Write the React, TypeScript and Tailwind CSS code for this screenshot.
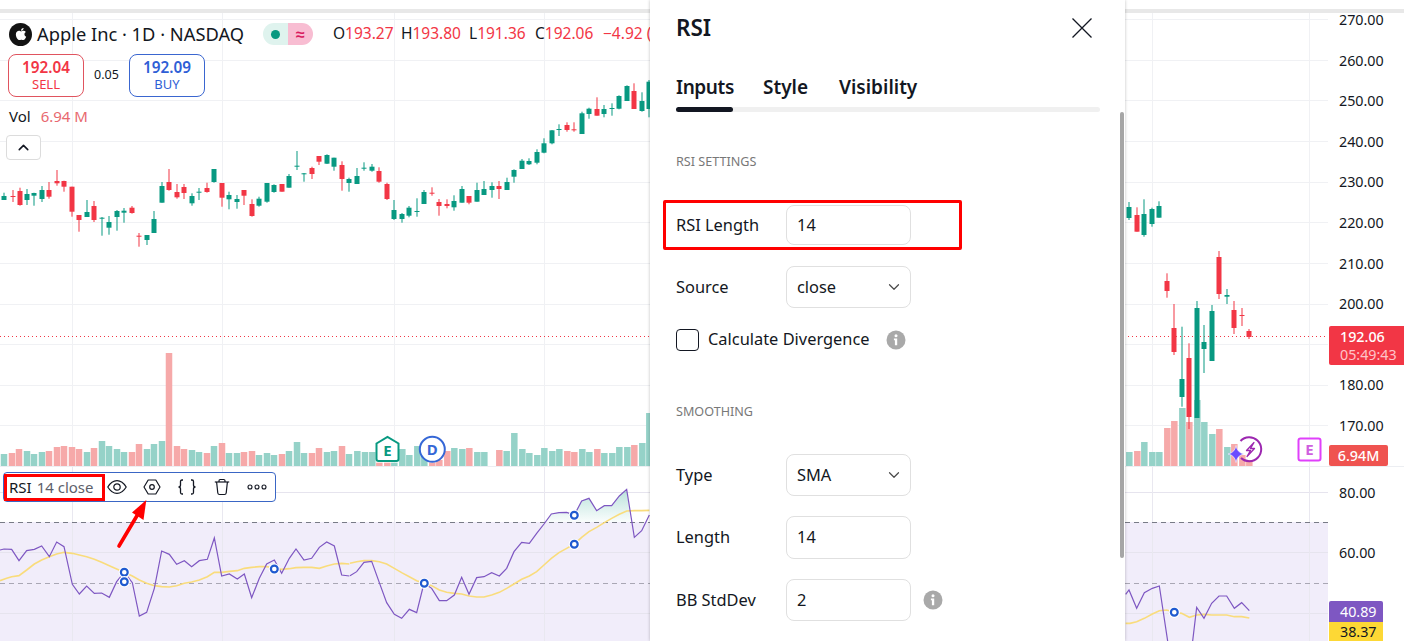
import React from 'react';
import { FaApple } from 'react-icons/fa';
import { ChevronDown, ChevronUp } from 'lucide-react';

const GREEN = '#089981';
const RED = '#f23645';

type Candle = [number, number, number, number, number, 'g' | 'r'];

const candles: Candle[] = [
  [4.3, 192.7, 200, 196, 200, 'g'], [12.5, 190, 202, 196, 197, 'r'], [19.5, 187.7, 205.7, 191, 205, 'r'],
  [27.3, 189, 205, 194, 200, 'g'], [34.3, 192.7, 205.7, 193, 195.7, 'g'], [42.3, 186, 202, 190, 199, 'g'],
  [49.3, 182, 198.7, 190, 196.7, 'r'], [57.3, 170, 185.7, 181, 183.3, 'r'], [64.3, 180.7, 191.7, 181, 186.7, 'r'],
  [72.3, 186.7, 216.7, 186.7, 211.7, 'r'], [79.3, 215, 231.7, 215, 220, 'r'], [87.3, 200, 217, 212, 217, 'g'],
  [94.3, 201, 222, 206, 220, 'r'], [102.3, 217, 235.7, 217.7, 218.7, 'g'], [109.3, 216, 234.7, 222, 227.7, 'g'],
  [117.3, 210, 230.7, 211, 217, 'g'], [124.3, 208, 222.7, 210.7, 212.7, 'g'], [132.3, 206, 213.7, 207.7, 213, 'r'],
  [139.3, 233, 246.7, 235.7, 236.7, 'r'], [147.3, 235, 245, 235, 240, 'g'], [154.3, 211, 233, 219, 233, 'g'],
  [162.3, 182, 202.7, 186, 202.7, 'g'], [169.3, 169, 190.7, 182, 190, 'r'], [177.3, 184, 198.7, 192, 197.3, 'r'],
  [184.3, 184, 199, 187, 193, 'r'], [192.3, 193.3, 205.7, 196, 203.3, 'g'], [199.3, 188, 200, 191.7, 192.7, 'g'],
  [207.3, 182.7, 192.7, 188, 192, 'r'], [214.3, 169, 182.7, 169, 182, 'g'], [222.3, 183, 206.7, 183, 197.7, 'r'],
  [229.3, 191.7, 209.3, 195, 199.3, 'g'], [237.3, 195, 208.7, 199, 202, 'g'], [244.3, 190, 205, 190, 195.7, 'r'],
  [252.3, 199.3, 216.7, 204, 216, 'r'], [259.3, 196.7, 206.7, 198.7, 205.7, 'g'], [267.3, 183, 202.7, 183, 201.7, 'g'],
  [274.3, 184.3, 192.7, 185, 192, 'g'], [282.3, 184, 191.7, 184, 191.7, 'r'], [289.3, 174, 187.7, 176, 187.7, 'g'],
  [297.3, 151, 170, 165.7, 166.7, 'g'], [304.3, 173, 181.7, 173.3, 174.3, 'g'], [312.3, 166.7, 179, 168, 174, 'r'],
  [319.3, 156, 165, 156, 161.7, 'r'], [327.3, 154.3, 164, 155, 163.7, 'g'], [334.3, 157.7, 170.7, 157.7, 166.7, 'g'],
  [342.3, 161.3, 190.7, 165, 179, 'r'], [349.3, 177.7, 191.7, 179, 183, 'g'], [357.3, 168, 184, 176, 184, 'g'],
  [364.3, 162.3, 170.7, 167.7, 168.7, 'g'], [372.3, 164, 171.7, 166.7, 170.7, 'g'], [379.3, 167.3, 182.7, 171, 181.7, 'r'],
  [387.3, 182.7, 200, 184, 199, 'r'], [394.3, 200, 220, 210, 219, 'g'], [402.3, 213, 222.7, 214, 219, 'g'],
  [409.3, 206, 217.3, 207.7, 215.7, 'g'], [417.3, 198.3, 216.7, 211, 212, 'g'], [424.3, 190, 204, 192, 204, 'g'],
  [432.3, 187.3, 195.7, 192.7, 193.7, 'r'], [439.3, 199, 215.7, 202, 206, 'r'], [447.3, 199.3, 208.3, 204, 206, 'r'],
  [454.3, 195.3, 210.7, 201, 207.3, 'g'], [462.3, 186, 202.7, 189, 202.7, 'g'], [469.3, 196, 204.3, 196, 202.7, 'r'],
  [477.3, 182.7, 201.7, 190, 201.7, 'g'], [484.3, 181, 195, 189, 195, 'g'], [492.3, 182.3, 197.7, 186, 190, 'g'],
  [499.3, 181, 199, 186, 189, 'r'], [507.3, 177.7, 190, 182, 190, 'g'], [514.3, 169.3, 182.7, 170, 176.7, 'g'],
  [522.3, 159, 169, 160.7, 169, 'g'], [529.3, 158.3, 165, 161, 164.3, 'g'], [537.3, 149.3, 164.3, 152, 162.7, 'g'],
  [544.3, 138.3, 153.3, 143.3, 152.7, 'g'], [552.3, 130, 144.3, 130.3, 143.3, 'g'], [559.3, 124.3, 136, 129, 130, 'g'],
  [567.3, 122.3, 131.7, 125, 130, 'r'], [574.3, 122.3, 131.7, 129.3, 130.3, 'r'], [582.3, 111.7, 134, 113.3, 134, 'g'],
  [589.3, 107.7, 118.7, 108.7, 114, 'g'], [597.3, 97.3, 115.7, 109, 115.7, 'r'], [604.3, 105, 117.3, 109, 114, 'g'],
  [612.3, 103.3, 115.7, 108, 109, 'g'], [619.3, 95.3, 109.3, 96, 108.7, 'g'], [627.3, 85.3, 101, 86, 101, 'g'],
  [634.3, 83.3, 109, 91, 109, 'r'], [642.3, 92.3, 111.7, 101, 111, 'g'], [649.3, 80, 117.3, 81.7, 109, 'g'],
  [1129.3, 202, 220, 207, 218, 'g'], [1137.3, 207.3, 231.7, 215, 231.7, 'r'], [1144.3, 199.3, 236.7, 214, 235, 'g'],
  [1152.3, 207.7, 226.7, 209, 224, 'g'], [1159.3, 201.3, 217.7, 206, 217.7, 'g'], [1167.3, 273.3, 297.7, 281, 291, 'r'],
  [1174.3, 304, 355, 328, 352, 'r'], [1182.3, 326.7, 406.7, 379, 397, 'g'], [1189.3, 343.3, 429, 358, 417, 'r'],
  [1197.3, 301, 418, 308, 418, 'g'], [1204.3, 325, 373, 342, 349, 'g'], [1212.3, 305, 361, 311, 361, 'g'],
  [1219.3, 251, 299, 257, 294, 'r'], [1227.3, 289, 304, 295, 296.7, 'g'], [1234.3, 301, 334, 310, 328, 'r'],
  [1242.3, 308, 326, 315, 316, 'r'], [1249.3, 329, 339, 331, 337, 'r'],
];

// volume: [x, top y, colour]; tops are read off the 3x crops, so they are divided back down
const volLeft: [number, number, string][] = [
  [4, 342, 'g'], [12, 339, 'r'], [19, 327, 'r'], [27, 333, 'g'], [34, 342, 'g'], [42, 336, 'g'], [49, 333, 'r'], [57, 321, 'r'],
  [64, 318, 'r'], [72, 321, 'r'], [79, 327, 'r'], [87, 336, 'g'], [94, 324, 'r'], [102, 303, 'g'], [109, 318, 'g'], [117, 327, 'g'],
  [124, 336, 'g'], [132, 336, 'r'], [139, 312, 'r'], [147, 327, 'g'], [154, 312, 'g'], [162, 303, 'g'], [169, 39, 'r'], [177, 318, 'r'],
  [184, 327, 'r'], [192, 330, 'g'], [199, 336, 'g'], [207, 339, 'r'], [214, 318, 'g'], [222, 309, 'r'], [229, 339, 'g'], [237, 339, 'g'],
  [244, 336, 'r'], [252, 333, 'r'], [259, 345, 'g'], [267, 339, 'g'], [274, 345, 'g'], [282, 342, 'r'], [289, 333, 'g'], [297, 306, 'g'],
  [304, 339, 'g'], [312, 339, 'r'], [319, 324, 'r'], [327, 336, 'g'], [334, 333, 'g'], [342, 318, 'r'], [349, 342, 'g'],
];
const volMid: [number, number, string][] = [
  [22, 93, 'g'], [45, 96, 'g'], [67, 96, 'g'], [88, 128, 'r'], [112, 128, 'r'], [133, 128, 'g'], [157, 87, 'g'], [178, 105, 'g'],
  [202, 78, 'g'], [223, 100, 'g'], [247, 128, 'r'], [268, 120, 'r'], [292, 93, 'r'], [313, 84, 'g'], [337, 87, 'g'], [358, 84, 'r'],
  [382, 96, 'g'], [403, 96, 'g'], [448, 90, 'r'], [470, 93, 'g'], [493, 39, 'g'], [517, 87, 'g'], [538, 99, 'g'], [562, 105, 'g'],
  [583, 84, 'g'], [607, 93, 'g'], [628, 87, 'g'], [652, 93, 'r'], [673, 96, 'r'], [697, 87, 'g'], [718, 96, 'g'], [742, 87, 'r'],
  [763, 99, 'g'], [787, 99, 'g'], [808, 81, 'g'], [832, 81, 'g'], [853, 75, 'r'], [877, 69, 'g'], [898, -21, 'g'],
];
const volRight: [number, number, string][] = [
  [28, 816, 'g'], [52, 813, 'r'], [73, 786, 'g'], [97, 816, 'g'], [118, 816, 'g'], [142, 744, 'r'], [163, 723, 'r'], [187, 684, 'g'],
  [208, 726, 'r'], [232, 660, 'g'], [253, 726, 'g'], [277, 762, 'g'], [298, 747, 'r'], [322, 801, 'g'], [343, 792, 'r'], [367, 825, 'r'], [388, 840, 'r'],
];

const volumes = [
  ...volLeft.map(([x, t, c]) => ({ x, top: 340 + t / 3, c })),
  ...volMid.map(([x, t, c]) => ({ x: 350 + x / 3, top: 420 + t / 3, c })),
  ...volRight.map(([x, t, c]) => ({ x: 1120 + x / 3, top: 180 + t / 3, c })),
];

const pts = (list: number[][], ox: number, oy: number) =>
  list.map(([x, y]) => `${ox + x / 3},${oy + y / 3}`).join(' ');

const rsiA = [[0,630],[12,627],[35,628],[57,662],[80,632],[103,628],[125,618],[148,650],[170,606],[192,620],[217,733],[238,762],[260,738],[283,760],[305,759],[328,772],[350,725],[373,697],[397,728],[418,828],[440,817],[463,745],[485,633],[508,643],[530,673],[553,662],[575,680],[598,662],[622,658],[643,594],[665,708],[688,702],[712,717],[733,702],[755,773],[778,715],[800,672],[823,660],[845,700],[868,655],[888,627],[912,660],[935,655],[958,622],[980,606],[1003,618],[1025,705],[1048,708]];
const rsiB = [[0,467],[20,455],[42,427],[65,424],[88,488],[110,548],[133,583],[155,595],[178,568],[200,578],[222,490],[245,505],[268,542],[290,542],[313,525],[335,472],[357,523],[380,473],[402,470],[425,458],[448,468],[470,445],[492,395],[515,367],[538,370],[560,340],[582,312],[604,282],[627,278],[650,277],[673,285],[695,243],[717,235],[740,272],[763,257],[785,257],[808,228],[830,208],[853,352],[875,332],[898,285]];
const rsiC = [[17,403],[27,390],[50,445],[73,398],[97,385],[118,378],[143,543],[150,580]];
const rsiD = [[212,580],[218,543],[230,442],[252,475],[275,430],[297,408],[320,408],[343,445],[365,428],[388,452]];
const maA = [[0,722],[20,715],[35,710],[57,707],[80,690],[103,672],[125,660],[148,650],[170,642],[192,637],[217,640],[238,645],[260,650],[283,658],[305,667],[328,677],[350,687],[373,697],[397,708],[418,720],[440,730],[463,737],[485,740],[508,741],[530,737],[553,730],[575,726],[598,720],[622,710],[643,697],[665,697],[688,694],[712,692],[733,685],[755,682],[778,680],[800,680],[823,684],[845,688],[868,686],[888,683],[912,682],[935,682],[958,685],[980,678],[1003,672],[1025,670],[1048,672]];
const maB = [[0,430],[20,425],[42,422],[65,422],[88,425],[110,432],[133,445],[155,458],[178,470],[200,482],[222,490],[245,497],[268,510],[290,517],[313,520],[335,522],[357,528],[380,531],[402,531],[425,525],[448,517],[470,505],[492,492],[515,478],[538,468],[560,455],[582,435],[604,415],[627,398],[650,385],[673,372],[695,352],[717,335],[740,322],[763,308],[785,295],[808,283],[830,273],[853,272],[875,272],[898,271]];
const maC = [[17,490],[30,490],[50,485],[73,475],[97,462],[118,452],[140,450],[163,457],[185,460],[208,472],[230,465],[252,463],[275,465],[320,465],[343,470],[365,470],[388,474]];
const overbought = [[582,307],[604,282],[627,278],[650,277],[673,285],[695,243],[717,235],[740,272],[763,257],[785,257],[808,228],[830,208],[842,307]];

const rings = [[124.3, 572.3], [124.3, 581.7], [274.3, 569], [424.3, 583.3], [574.3, 515.3], [574.3, 544.3], [1174.3, 612.3]];
const vGrid = [72.5, 222.5, 394.5, 544.5, 1152.5, 1309.5];
const hGrid = [19.5, 60.5, 100.5, 141.5, 182.5, 222.5, 263.5, 304.5, 344.5, 385.5, 425.5];
const prices = ['270.00', '260.00', '250.00', '240.00', '230.00', '220.00', '210.00', '200.00', '190.00', '180.00', '170.00'];

const MainChart = () => (
  <svg className="block w-[1328px] h-[453px]" viewBox="0 13 1328 453">
    {hGrid.map((y) => <line key={y} x1="0" x2="1328" y1={y} y2={y} stroke="#f0f1f4" />)}
    {vGrid.map((x) => <line key={x} x1={x} x2={x} y1="13" y2="466" stroke="#f0f1f4" />)}
    {volumes.map((v, i) => (
      <rect key={i} x={v.x - 3.25} y={v.top} width="6.5" height={466 - v.top} fill={v.c === 'g' ? '#95d2c8' : '#f6a9a9'} />
    ))}
    <line x1="0" x2="1328" y1="336.5" y2="336.5" stroke={RED} strokeDasharray="1 3" />
    {candles.map(([x, wt, wb, bt, bb, c], i) => (
      <g key={i} fill={c === 'g' ? GREEN : RED}>
        <rect x={Math.round(x) - 0.5} y={wt} width="1" height={wb - wt} />
        <rect x={Math.round(x) - 2.5} y={bt} width="5" height={Math.max(bb - bt, 1)} />
      </g>
    ))}
    <path d="M376.5 443.5 L387.5 436.8 L398.5 443.5 V459 Q398.5 461 396.5 461 H378.5 Q376.5 461 376.5 459 Z" fill="#fff" stroke={GREEN} strokeWidth="2" />
    <text x="387.5" y="455.5" textAnchor="middle" fontSize="15" fontWeight="700" fill={GREEN}>E</text>
    <circle cx="432.3" cy="449.3" r="12.5" fill="#fff" stroke="#3567d6" strokeWidth="2" />
    <text x="432.3" y="454.8" textAnchor="middle" fontSize="15" fontWeight="700" fill="#3567d6">D</text>
    <path d="M1240.5 441 A12 12 0 1 1 1241 458" fill="none" stroke="#9c27b0" strokeWidth="2" />
    <path d="M1254 442.5 L1246.5 450.5 H1250.5 L1247 456.5 L1254.5 448.5 H1250.5 Z" fill="none" stroke="#9c27b0" strokeWidth="1.3" strokeLinejoin="round" />
    <path d="M1236 445.5 Q1237.2 452.8 1244 454 Q1237.2 455.2 1236 462.5 Q1234.8 455.2 1228 454 Q1234.8 452.8 1236 445.5 Z" fill="#6a4cff" stroke="#fff" strokeWidth="0.6" />
    <rect x="1298.5" y="438.5" width="22" height="22" rx="2" fill="#fff" stroke="#e040fb" strokeWidth="2" />
    <text x="1309.5" y="455" textAnchor="middle" fontSize="15" fontWeight="700" fill="#cf5fdf">E</text>
  </svg>
);

const RsiChart = () => (
  <svg className="block w-[1328px] h-[174px]" viewBox="0 467 1328 174">
    <defs>
      <linearGradient id="ob" x1="0" x2="0" y1="0" y2="1">
        <stop offset="0" stopColor={GREEN} stopOpacity="0.28" />
        <stop offset="1" stopColor={GREEN} stopOpacity="0.02" />
      </linearGradient>
    </defs>
    <rect x="0" y="522" width="1328" height="119" fill="#f1edfa" />
    {[492.5, 552.5, 613.5].map((y) => <line key={y} x1="0" x2="1328" y1={y} y2={y} stroke="#e6e4ee" />)}
    {vGrid.map((x) => <line key={x} x1={x} x2={x} y1="467" y2="641" stroke="#e9e8f0" />)}
    <line x1="0" x2="1328" y1="522.5" y2="522.5" stroke="#787b86" strokeDasharray="5 4" />
    <line x1="0" x2="1328" y1="583.5" y2="583.5" stroke="#a9a7b4" strokeDasharray="5 4" />
    <polygon points={pts(overbought, 350, 420)} fill="url(#ob)" />
    <g fill="none" stroke="#f9dc7c" strokeWidth="1.6">
      <polyline points={pts(maA, 0, 340)} />
      <polyline points={pts(maB, 350, 420)} />
      <polyline points={pts(maC, 1120, 460)} />
    </g>
    <g fill="none" stroke="#7e57c2" strokeWidth="1.2">
      <polyline points={pts(rsiA, 0, 340)} />
      <polyline points={pts(rsiB, 350, 420)} />
      <polyline points={pts(rsiC, 1120, 460)} />
      <polyline points={pts(rsiD, 1120, 460)} />
    </g>
    {rings.map(([x, y], i) => (
      <g key={i}>
        <circle cx={x} cy={y} r="5.6" fill="#fff" />
        <circle cx={x} cy={y} r="3.4" fill="#fff" stroke="#1f5ad0" strokeWidth="2.2" />
      </g>
    ))}
  </svg>
);

const EyeIcon = () => (
  <svg width="20" height="20" viewBox="0 0 20 20" fill="none" stroke="#131722" strokeWidth="1.2">
    <path d="M0.8 10 C4 4.6 7 3.6 10 3.6 C13 3.6 16 4.6 19.2 10 C16 15.4 13 16.4 10 16.4 C7 16.4 4 15.4 0.8 10 Z" />
    <circle cx="10" cy="10" r="3.2" />
  </svg>
);
const GearIcon = () => (
  <svg width="18" height="18" viewBox="0 0 18 18" fill="none" stroke="#131722" strokeWidth="1.2">
    <path d="M5.2 2 H12.8 L17 9 L12.8 16 H5.2 L1 9 Z" strokeLinejoin="round" />
    <circle cx="9" cy="9" r="2.3" />
  </svg>
);
const BracesIcon = () => (
  <svg width="20" height="18" viewBox="0 0 20 18" fill="none" stroke="#131722" strokeWidth="1.3">
    <path d="M6 2 H5 Q3.5 2 3.5 3.5 V7 Q3.5 9 1.5 9 Q3.5 9 3.5 11 V14.5 Q3.5 16 5 16 H6" />
    <path d="M14 2 H15 Q16.5 2 16.5 3.5 V7 Q16.5 9 18.5 9 Q16.5 9 16.5 11 V14.5 Q16.5 16 15 16 H14" />
  </svg>
);
const TrashIcon = () => (
  <svg width="16" height="18" viewBox="0 0 16 18" fill="none" stroke="#131722" strokeWidth="1.2">
    <path d="M0.8 4 H15.2" />
    <path d="M5 4 V2.8 Q5 1.5 6.3 1.5 H9.7 Q11 1.5 11 2.8 V4" />
    <path d="M2.6 4 L3.8 15 Q4 16.5 5.5 16.5 H10.5 Q12 16.5 12.2 15 L13.4 4" />
  </svg>
);
const DotsIcon = () => (
  <svg width="20" height="6" viewBox="0 0 20 6" fill="none" stroke="#131722" strokeWidth="1.1">
    <circle cx="3" cy="3" r="2" /><circle cx="10" cy="3" r="2" /><circle cx="17" cy="3" r="2" />
  </svg>
);
const InfoIcon = () => (
  <svg width="20" height="20" viewBox="0 0 20 20">
    <circle cx="10" cy="10" r="9.5" fill="#a9a9a9" />
    <circle cx="10" cy="5.7" r="1.5" fill="#fff" />
    <path d="M7.9 8.6 H11.2 V15.2 H8.9 V10.3 H7.9 Z" fill="#fff" />
  </svg>
);

const Field = ({ value, select, className = '' }: { value: string; select?: boolean; className?: string }) => (
  <div className={`w-[125px] flex items-center justify-between rounded-[8px] border border-[#e0e0e0] bg-white pl-[10px] pr-[7px] ${className}`}>
    <span>{value}</span>
    {select && <ChevronDown size={18} strokeWidth={1.6} color="#4a4a4a" />}
  </div>
);

const Row = ({ label, children, className = '' }: { label: string; children: React.ReactNode; className?: string }) => (
  <div className={`relative flex items-center ${className}`}>
    <span className="w-[110px]">{label}</span>
    {children}
  </div>
);

const SettingsPanel = () => (
  <aside className="absolute left-[650px] top-0 w-[475px] h-[641px] bg-white pl-[26px] pr-[25px] shadow-[0_0_3px_rgba(0,0,0,0.25)] text-[16.4px] text-[#131722] flex flex-col">
    <header className="h-[56px] flex items-center justify-between pr-[8px]">
      <h2 className="text-[22.5px] font-semibold">RSI</h2>
      <svg width="20" height="20" viewBox="0 0 20 20" stroke="#131722" strokeWidth="1.3">
        <path d="M0.5 0.5 L19.5 19.5 M19.5 0.5 L0.5 19.5" />
      </svg>
    </header>
    <nav className="mt-[16px] h-[30px] flex items-center text-[19px] font-semibold">
      <span className="w-[87px] tracking-[-0.4px]">Inputs</span>
      <span className="w-[76px]">Style</span>
      <span>Visibility</span>
    </nav>
    <div className="mt-[5px] h-[5px] rounded-full bg-[#f0f0f0]">
      <div className="h-full w-[57px] rounded-full bg-[#131722]" />
    </div>
    <div className="mt-[42px] h-[16px] leading-[16px] text-[12.6px] text-[#787878]">RSI SETTINGS</div>
    <Row label="RSI Length" className="mt-[35px]">
      <Field value="14" className="h-[40px]" />
      <div className="absolute left-[-13px] top-[-5px] w-[299px] h-[50px] border-[3.5px] border-[#f00] rounded-[2px]" />
    </Row>
    <Row label="Source" className="mt-[21px]">
      <Field value="close" select className="h-[42px]" />
    </Row>
    <label className="mt-[21px] h-[22px] flex items-center">
      <span className="w-[23px] h-[22px] rounded-[4px] border border-[#131722]" />
      <span className="ml-[9px] mt-[-2px]">Calculate Divergence</span>
      <span className="ml-[16px] flex"><InfoIcon /></span>
    </label>
    <div className="mt-[53px] h-[16px] leading-[16px] text-[12.6px] text-[#787878]">SMOOTHING</div>
    <Row label="Type" className="mt-[34px]">
      <Field value="SMA" select className="h-[42px]" />
    </Row>
    <Row label="Length" className="mt-[20px]">
      <Field value="14" className="h-[43px]" />
    </Row>
    <Row label="BB StdDev" className="mt-[20px]">
      <Field value="2" className="h-[42px]" />
      <span className="ml-[12px] flex"><InfoIcon /></span>
    </Row>
    <div className="absolute left-[470px] top-[112px] w-[4px] h-[446px] rounded-full bg-[#a6a6a6]" />
  </aside>
);

const Legend = () => (
  <div className="absolute left-[8px] top-[10px] flex flex-col items-start whitespace-nowrap text-[#131722]">
    <div className="h-[22px] flex items-center text-[15.5px]">
      <span className="ml-[1px] w-[23px] h-[23px] rounded-full bg-[#131313] flex items-center justify-center text-white">
        <FaApple size={14} />
      </span>
      <span className="ml-[5px] w-[226px] text-[18.3px]">Apple Inc · 1D · NASDAQ</span>
      <span className="w-[50px] h-[22px] flex rounded-full overflow-hidden">
        <span className="w-[25px] bg-[#dff3ee] flex items-center justify-center">
          <span className="w-[9px] h-[9px] rounded-full bg-[#089981]" />
        </span>
        <span className="w-[25px] bg-[#f8bdd2] text-[#d81b60] flex items-center justify-center text-[16px] font-semibold">≈</span>
      </span>
      <span className="ml-[20px] w-[68px]">O<span className="text-[#f23645]">193.27</span></span>
      <span className="w-[68px]">H<span className="text-[#f23645]">193.80</span></span>
      <span className="w-[66px]">L<span className="text-[#f23645]">191.36</span></span>
      <span className="w-[68px]">C<span className="text-[#f23645]">192.06</span></span>
      <span className="text-[#f23645]">−4.92 (</span>
    </div>
    <div className="mt-[9px] flex items-center">
      <div className="w-[76px] h-[43px] rounded-[8px] border border-[#e0545f] flex flex-col items-center justify-center text-[#f23645] bg-white leading-[17px]">
        <span className="text-[15.3px] font-semibold">192.04</span>
        <span className="text-[13px]">SELL</span>
      </div>
      <span className="w-[45px] text-center text-[12.5px]">0.05</span>
      <div className="w-[76px] h-[43px] rounded-[8px] border border-[#3a66d0] flex flex-col items-center justify-center text-[#2f5fd6] bg-white leading-[17px]">
        <span className="text-[15.3px] font-semibold">192.09</span>
        <span className="text-[13px]">BUY</span>
      </div>
    </div>
    <div className="mt-[9px] ml-[1px] h-[20px] flex items-center text-[15px]">
      Vol<span className="ml-[10px] text-[#e8696f]">6.94 M</span>
    </div>
    <div className="mt-[9px] ml-[-2px] w-[35px] h-[25px] rounded-[4px] border border-[#dcdcdc] bg-white flex items-center justify-center">
      <ChevronUp size={17} strokeWidth={2.2} />
    </div>
  </div>
);

const RsiLegend = () => (
  <div className="absolute left-[3px] top-[5px] w-[273px] h-[30px] flex items-center rounded-[4px] border border-[#3a66c5] bg-white whitespace-nowrap">
    <div className="w-[101px] h-[27px] border-[3px] border-[#f00] flex items-center pl-[2px] text-[15px]">
      <span className="text-[#131722]">RSI</span>
      <span className="ml-[5px] text-[#5d606b]">14 close</span>
    </div>
    <div className="flex items-center gap-[11px]">
      <span className="w-[24px] flex justify-center"><EyeIcon /></span>
      <span className="w-[24px] flex justify-center"><GearIcon /></span>
      <span className="w-[24px] flex justify-center"><BracesIcon /></span>
      <span className="w-[24px] flex justify-center"><TrashIcon /></span>
      <span className="w-[24px] flex justify-center"><DotsIcon /></span>
    </div>
  </div>
);

const Arrow = () => (
  <svg className="absolute left-[110px] top-[28px] w-[45px] h-[60px]" viewBox="110 495 45 60">
    <line x1="119" y1="546" x2="138" y2="514" stroke="#f00" strokeWidth="3.6" strokeLinecap="round" />
    <polygon points="146.3,500 143.5,520 132,512.5" fill="#f00" />
  </svg>
);

export default function App() {
  return (
    <div className="relative w-[1404px] h-[641px] overflow-hidden bg-white font-['Noto_Sans',sans-serif]">
      <div className="mt-[9px] h-[4px] bg-[#e8e8e8]" />
      <div className="flex">
        <div className="w-[1328px] flex flex-col">
          <div className="relative h-[453px]">
            <MainChart />
            <Legend />
          </div>
          <div className="h-px bg-[#eceef2]" />
          <div className="relative h-[174px]">
            <RsiChart />
            <RsiLegend />
            <Arrow />
          </div>
        </div>
        <div className="w-[76px] flex flex-col text-[14.3px] text-[#131722]">
          <div className="relative h-[453px]">
            <div className="mt-[-13.6px] flex flex-col pl-[11px]">
              {prices.map((p) => (
                <span key={p} className={`h-[40.6px] flex items-center ${p === '190.00' ? 'invisible' : ''}`}>{p}</span>
              ))}
            </div>
            <div className="absolute left-px top-[313px] w-[75px] h-[39px] rounded-l-[2px] bg-[#f23645] flex flex-col items-start justify-center pl-[11px] leading-[18px] text-white">
              <span className="font-medium">192.06</span>
              <span className="text-[#ffc4c9]">05:49:43</span>
            </div>
            <div className="absolute left-px top-[432px] w-[59px] h-[21px] rounded-[2px] bg-[#ef5350] flex items-center justify-center text-white font-medium">6.94M</div>
          </div>
          <div className="h-px bg-[#eceef2]" />
          <div className="relative h-[174px]">
            <div className="mt-[-4px] flex flex-col pl-[11px]">
              <span className="h-[60px] flex items-center">80.00</span>
              <span className="h-[60px] flex items-center">60.00</span>
            </div>
            <div className="absolute left-px top-[134px] w-[54px] h-[21px] rounded-t-[2px] bg-[#7e57c2] flex items-center pl-[11px] text-white">40.89</div>
            <div className="absolute left-px top-[155px] w-[54px] h-[20px] bg-[#fdd835] flex items-center pl-[11px]">38.37</div>
          </div>
        </div>
      </div>
      <SettingsPanel />
    </div>
  );
}
